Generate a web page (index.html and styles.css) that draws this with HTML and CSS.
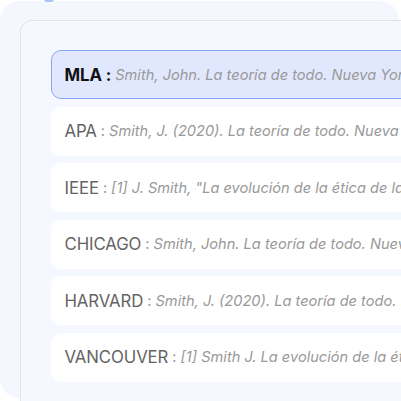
FILE: index.html
```html
<!DOCTYPE html>
<html>
<head>
<meta charset="utf-8">
<link rel="stylesheet" href="styles.css">
</head>
<body>
<div class="tab-peek"></div>
<div class="outer">
  <div class="inner">
    <div class="list">
      <div class="card selected"><span class="label">MLA :</span> <span class="cite">Smith, John. La teoría de todo. Nueva York: Editorial Universo, 2020.</span></div>
      <div class="card"><span class="label">APA</span> <span class="sep">:</span> <span class="cite">Smith, J. (2020). La teoría de todo. Nueva York: Editorial Universo.</span></div>
      <div class="card"><span class="label">IEEE</span> <span class="sep">:</span> <span class="cite">[1] J. Smith, "La evolución de la ética de la inteligencia artificial"</span></div>
      <div class="card"><span class="label">CHICAGO</span> <span class="sep">:</span> <span class="cite">Smith, John. La teoría de todo. Nueva York: Editorial Universo, 2020.</span></div>
      <div class="card"><span class="label">HARVARD</span> <span class="sep">:</span> <span class="cite">Smith, J. (2020). La teoría de todo. Nueva York: Editorial Universo.</span></div>
      <div class="card"><span class="label">VANCOUVER</span> <span class="sep">:</span> <span class="cite">[1] Smith J. La evolución de la ética de la inteligencia artificial.</span></div>
    </div>
  </div>
</div>
</body>
</html>
```
FILE: styles.css
```css
html, body {
  margin: 0;
  padding: 0;
  background: #ffffff;
  width: 401px;
  height: 401px;
  overflow: hidden;
  font-family: Inter, "Liberation Sans", sans-serif;
}
.tab-peek {
  position: absolute;
  left: 44px;
  top: -4px;
  width: 10px;
  height: 6px;
  border-radius: 3px;
  background: #a9c3f4;
}
.outer {
  margin-top: 1px;
  width: 399px;
  height: 397px;
  border-radius: 20px;
  background: #f4f7fe;
  box-sizing: border-box;
  padding: 19px 0 0 20px;
}
.inner {
  width: 480px;
  height: 420px;
  border-top: 1.5px solid #e3e3e6;
  border-left: 1.5px solid #e3e3e6;
  border-top-left-radius: 12px;
  box-sizing: border-box;
  padding: 29px 0 0 29.5px;
  background: #f5f8fe;
}
.list {
  display: flex;
  flex-direction: column;
  gap: 7.5px;
}
.card {
  width: 440px;
  height: 49px;
  box-sizing: border-box;
  background: #ffffff;
  border-radius: 10px;
  display: flex;
  align-items: center;
  padding-left: 14px;
  white-space: nowrap;
  overflow: hidden;
  gap: 4px;
}
.card.selected {
  background: #e1e8fd;
  border: 1px solid #85aaf3;
  padding-left: 13px;
}
.label {
  font-size: 16.8px;
  color: #646464;
  letter-spacing: -0.1px;
}
.selected .label {
  font-weight: 700;
  color: #111111;
}
.sep {
  font-size: 14.6px;
  color: #9a9a9a;
}
.cite {
  font-size: 14.6px;
  font-style: italic;
  color: #999999;
}
```
